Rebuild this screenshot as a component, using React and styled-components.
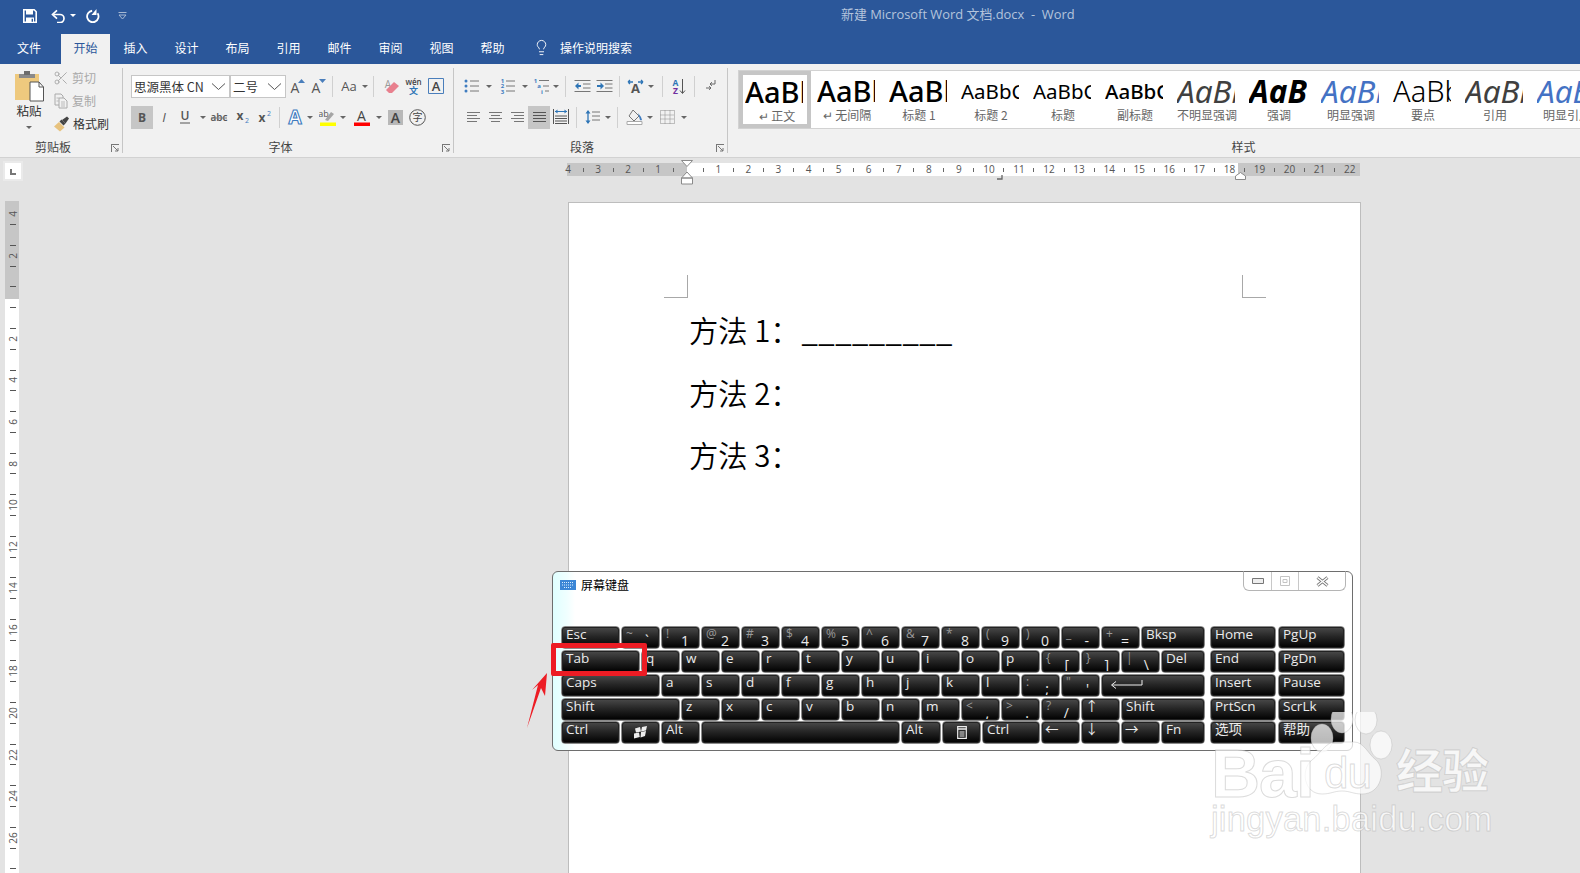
import React from "react";
import styled, { createGlobalStyle } from "styled-components";
import { Scissors, Lightbulb } from "lucide-react";

const CJK = `"Noto Sans CJK SC", "Noto Sans", sans-serif`;
const LATIN = `"Open Sans", "Noto Sans CJK SC", sans-serif`;

const Global = createGlobalStyle`
  html, body { margin: 0; padding: 0; overflow: hidden; background: #e3e3e3; }
  body { font-family: ${CJK}; }
  * { box-sizing: border-box; }
`;

const Root = styled.div`
  position: relative; width: 1580px; height: 873px; overflow: hidden;
  display: flex; flex-direction: column; background: #e3e3e3;
`;

/* ---------- title & tabs ---------- */
const TitleBar = styled.div`
  height: 34px; flex: none; background: #2b579a; position: relative;
  display: flex; align-items: center; padding: 0 0 3px 23px;
`;
const QuickItem = styled.div`
  width: ${p => p.$w}px; height: 18px; display: flex; align-items: center; gap: 4px;
`;
const DocTitle = styled.div`
  margin-left: 711px; margin-top: -4px; font-size: 12.9px; color: #b4c4dc; white-space: pre; font-family: ${LATIN};
`;
const TabBar = styled.div`
  height: 30px; flex: none; background: #2b579a; display: flex; padding-left: 4px;
`;
const Tab = styled.div`
  width: ${p => p.$w}px; margin-right: ${p => p.$mr || 0}px;
  display: flex; align-items: center; justify-content: center; font-size: 12px; padding-bottom: 3px;
  color: ${p => (p.$active ? "#2b579a" : "#fff")};
  background: ${p => (p.$active ? "#f1f1f1" : "transparent")};
`;
const Tell = styled.div`
  margin-left: 15px; padding-bottom: 3px; display: flex; align-items: center; gap: 10px; color: #fff; font-size: 12px;
`;

/* ---------- ribbon ---------- */
const Ribbon = styled.div`
  height: 94px; flex: none; background: #f1f1f1; border-bottom: 1px solid #d2d2d2;
  display: flex; padding-top: 4px; color: #444; overflow: hidden;
`;
const Group = styled.div`
  position: relative; flex: none; width: ${p => p.$w}px; height: 85px;
  border-right: 1px solid ${p => (p.$open ? "transparent" : "#c6c6c6")}; display: flex; flex-direction: column;
`;
const GroupBody = styled.div`
  height: 70px; flex: none; display: flex;
`;
const GroupLabel = styled.div`
  height: 15px; line-height: 17px; font-size: 12px; color: #444; text-align: center;
  padding-right: ${p => p.$pr || 0}px;
`;
const Launcher = styled.div`
  position: absolute; right: 3px; bottom: 1px; width: 8px; height: 8px;
  border-left: 1px solid #777; border-top: 1px solid #777;
  display: flex; align-items: flex-end; justify-content: flex-end;
`;
const PasteCol = styled.div`
  width: 32px; margin-left: 13px; padding-top: 3px; display: flex; flex-direction: column; align-items: center;
  font-size: 12.5px; color: #333; line-height: 16px;
`;
const PasteLabel = styled.div`
  margin-top: 1px;
`;
const PasteCaret = styled.div`
  width: 0; height: 0; margin-top: 7px;
  border-left: 3px solid transparent; border-right: 3px solid transparent; border-top: 3px solid #666;
`;
const ClipCol = styled.div`
  margin: -2px 0 0 8px; display: flex; flex-direction: column;
`;
const ClipItem = styled.div`
  height: 23px; display: flex; align-items: center; gap: 3px; font-size: 12px;
  color: ${p => (p.$off ? "#a9a9a9" : "#333")};
`;
const ToolStack = styled.div`
  padding: 7px 0 0 ${p => p.$pl}px; display: flex; flex-direction: column; gap: 8px;
`;
const ToolRow = styled.div`
  height: 23px; display: flex; align-items: center;
`;
const Tool = styled.div`
  width: ${p => p.$w}px; height: 23px; flex: none; display: flex; align-items: center; justify-content: center;
  margin-left: ${p => p.$ml || 0}px; padding-bottom: 1px;
  background: ${p => (p.$on ? "#c6c6c6" : "transparent")};
`;
const Sep = styled.div`
  width: 1px; height: 21px; flex: none; background: #d0d0d0; margin: 0 ${p => p.$m}px;
`;
const Caret = styled.div`
  width: 0; height: 0; flex: none; margin: 0 ${p => p.$m ?? 0}px;
  border-left: 3px solid transparent; border-right: 3px solid transparent; border-top: 3px solid #666;
`;
const Select = styled.div`
  width: ${p => p.$w}px; height: 23px; flex: none; margin-right: ${p => p.$mr || 0}px;
  background: #fff; border: 1px solid #c6c6c6; padding: 0 3px 0 2px;
  display: flex; align-items: center; justify-content: space-between; font-size: 12.5px; color: #333; white-space: nowrap;
`;
const Gallery = styled.div`
  margin: 2px 0 0 10px; height: 59px; width: 1000px; background: #fff; border: 1px solid #d2d2d2; display: flex;
`;
const StyleItem = styled.div`
  width: 72px; height: 57px; flex: none; padding: 5px 0 0 ${p => (p.$sel ? 2 : 6)}px;
  border: ${p => (p.$sel ? "4px solid #c6c6c6" : "none")};
  display: flex; flex-direction: column; align-items: flex-start;
`;
const Preview = styled.div`
  width: 58px; height: 30px; overflow: hidden; white-space: nowrap; line-height: 30px;
  font-family: "Noto Sans", sans-serif; margin-top: ${p => (p.$sel ? -3 : 0)}px;
  font-size: ${p => p.$size}px; font-weight: ${p => p.$weight || 400}; font-style: ${p => (p.$italic ? "italic" : "normal")};
  color: ${p => p.$color || "#000"};
`;
const StyleName = styled.div`
  width: 60px; text-align: center; font-size: 12px; line-height: 16px; margin-top: ${p => (p.$sel ? 4 : 1)}px; color: #666; white-space: nowrap;
  margin-left: ${p => (p.$sel ? 2 : 0)}px;
`;

/* ---------- workspace ---------- */
const Workspace = styled.div`
  flex: 1; min-height: 0; display: grid; grid-template-columns: 567px 793px 1fr; grid-template-rows: 43px 1fr; background: #e3e3e3;
`;
const CornerCell = styled.div`
  padding: 3px 0 0 3px;
`;
const Corner = styled.div`
  width: 20px; height: 20px; background: #fff; border: 2px solid #eaeaea; position: relative;
  display: flex; align-items: center; justify-content: center;
`;
const CornerMark = styled.div`
  width: 6px; height: 6px; border-left: 2px solid #777; border-bottom: 2px solid #777; margin-top: 2px;
`;
const HRuler = styled.div`
  grid-column: 2; position: relative; margin-top: 5px; height: 13px;
  background: linear-gradient(to right, #c6c6c6 120px, #fff 120px, #fff 671px, #c6c6c6 671px);
  display: flex; padding-left: 0;
`;
const HItems = styled.div`
  display: flex; margin-left: -6.5px; align-items: center; height: 13px;
`;
const HItem = styled.div`
  flex: 0 0 15.04px; width: 15.04px; display: flex; justify-content: center; align-items: center;
  font-size: 10px; line-height: 13px; color: #555; font-family: ${LATIN}; white-space: nowrap;
`;
const HTick = styled.div`
  width: 1px; height: 4px; background: #666;
`;
const Marker = styled.div`
  position: absolute; left: ${p => p.$x}px; top: ${p => p.$y}px; line-height: 0;
`;
const VCell = styled.div`
  grid-column: 1; grid-row: 2; padding-left: 5px; min-height: 0; overflow: hidden;
`;
const VRuler = styled.div`
  width: 14px; height: 700px; padding-top: 8px;
  background: linear-gradient(to bottom, #c6c6c6 98px, #fff 98px);
`;
const VItem = styled.div`
  height: 10.4px; display: flex; align-items: center; justify-content: center; padding-left: 1px;
`;
const VLabel = styled.div`
  transform: rotate(-90deg); font-size: 10px; line-height: 10px; color: #555; font-family: ${LATIN}; white-space: nowrap;
`;
const VTick = styled.div`
  width: 6px; height: 1px; background: #555;
`;
const Page = styled.div`
  grid-column: 2; grid-row: 2; margin: 1px 0 0 1px; background: #fff; width: 793px; min-height: 0;
  border: 1px solid #bdbdbd; border-bottom: none; overflow: hidden;
`;
const CropRow = styled.div`
  display: flex; justify-content: space-between; padding: 72px 94px 0 95px;
`;
const Crop = styled.div`
  width: 24px; height: 23px; border-bottom: 1px solid #a8a8a8;
  ${p => (p.$right ? "border-left: 1px solid #a8a8a8;" : "border-right: 1px solid #a8a8a8;")}
`;
const DocBody = styled.div`
  padding: 0 0 0 120px; margin-top: 0;
`;
const DocLine = styled.div`
  height: 62.5px; line-height: 62.5px; font-size: 29.3px; font-weight: 350; color: #000; white-space: pre;
  font-family: ${CJK};
`;
const Blank = styled.span`
  letter-spacing: 0.5px; margin-left: 2px;
`;

/* ---------- on-screen keyboard ---------- */
const KbWindow = styled.div`
  position: absolute; left: 552px; top: 571px; width: 801px; height: 180px;
  border: 1px solid #6e6e6e; border-radius: 6px;
  background: linear-gradient(to right, #dfffff 0, #f0ffff 14px, #fff 22px);
  padding: 54px 0 0 8px;
`;
const KbTitle = styled.div`
  position: absolute; left: 7px; top: 5px; display: flex; align-items: center; gap: 5px; font-size: 12px; color: #000; line-height: 16px;
`;
const KbControls = styled.div`
  position: absolute; right: 6px; top: -1px; height: 20px; width: 103px; display: flex;
  border: 1px solid #b5b5b5; border-top-color: #6e6e6e; border-radius: 0 0 6px 6px; background: #fff;
`;
const KbCtl = styled.div`
  width: ${p => p.$w}px; display: flex; align-items: center; justify-content: center;
  border-right: ${p => (p.$last ? "none" : "1px solid #c8c8c8")};
`;
const KeyPad = styled.div`
  display: flex; gap: 5px;
`;
const KeyCol = styled.div`
  display: flex; flex-direction: column; gap: 1px;
`;
const KeyRow = styled.div`
  display: flex; gap: 1px; height: 23px; margin-top: ${p => (p.$pull ? -1 : 0)}px;
`;
const NavRow = styled(KeyRow)`
  gap: 2px;
`;
const Key = styled.div`
  width: ${p => p.$w}px; height: 23px; flex: none; border-radius: 4px; border: 1px solid #8b8b8b; outline: 1px solid #222; outline-offset: -2px;
  background: linear-gradient(to bottom, #4a4a4a 0, #262626 45%, #000 100%);
  color: #ececec; font-family: ${LATIN}; font-size: 13.5px; line-height: 14px; padding: 0 ${p => p.$pr ?? 4}px 0 ${p => p.$pl ?? 4}px;
  display: flex; justify-content: ${p => (p.$center ? "center" : "space-between")}; align-items: ${p => (p.$center ? "center" : "flex-start")};
  white-space: nowrap; overflow: hidden;
`;
const Sup = styled.span`
  font-size: 12px; color: #9a9a9a; line-height: 13px;
`;
const Main = styled.span`
  font-size: 14px; color: #ececec; line-height: 16px; margin-top: 6px;
`;
const EnterSlot = styled.span`
  margin: 5px 0 0 4px; line-height: 0;
`;

/* ---------- annotations ---------- */
const RedBox = styled.div`
  position: absolute; left: 551px; top: 643px; width: 96px; height: 33px;
  border: 5px solid #ed1c24; border-radius: 2px;
`;
const ArrowHolder = styled.div`
  position: absolute; left: 525px; top: 670px; line-height: 0;
`;
const Watermark = styled.div`
  position: absolute; left: 1208px; top: 712px; width: 300px; height: 130px; pointer-events: none;
`;
const PawArt = styled.svg`
  position: absolute; left: 0; top: 0;
`;
const MarkText = styled.div`
  position: absolute; left: ${p => p.$x}px; top: ${p => p.$y}px; font-size: ${p => p.$size}px; font-weight: ${p => p.$weight || 700};
  line-height: 1; white-space: nowrap; font-family: ${p => (p.$cjk ? CJK : `"Liberation Sans", sans-serif`)};
  letter-spacing: ${p => p.$ls || 0}px;
  color: rgba(255,255,255,.72); -webkit-text-stroke: 1px rgba(170,170,170,.42);
`;

/* ---------- icons ---------- */
const T = ({ x = 8, y = 13, s = 14, c = "#555", w = 400, fs = "normal", a = "middle", children }) => (
  <text x={x} y={y} fontSize={s} fill={c} fontWeight={w} fontStyle={fs} textAnchor={a} fontFamily="Open Sans, Noto Sans CJK SC, sans-serif">{children}</text>
);
const I = ({ w = 16, h = 16, children }) => <svg width={w} height={h} viewBox={`0 0 ${w} ${h}`} fill="none">{children}</svg>;

const Save = () => <I w={14} h={14}><path d="M0.800 .8h10.400l2 2v10.400H.8z" fill="none" stroke="#fff" strokeWidth="1.600"/><path d="M3 1h7v4.500H3z" fill="#fff"/><path d="M3 8.500h8v5H3z" fill="#fff"/><path d="M8.600 9.800h1.400v3H8.600z" fill="#2b579a"/></I>;
const Undo = () => <I w={15} h={14}><path d="M2.500 5.500h6.500a4 4 0 0 1 0 8H6" stroke="#fff" strokeWidth="1.700"/><path d="M6 1.300L1.500 5.500 6 9.700" stroke="#fff" strokeWidth="1.700"/></I>;
const Redo = () => <I w={14} h={14}><path d="M4 2.600a5.700 5.700 0 1 0 6 0" stroke="#fff" strokeWidth="1.800" transform="rotate(25 7 7)"/><path d="M10.500 0v6h-5z" fill="#fff"/></I>;
const Customize = () => <I w={9} h={8}><path d="M0.500 .5h8" stroke="#a7b9d3"/><path d="M1 3l3.500 4L8 3z" stroke="#a7b9d3"/></I>;
const WhiteCaret = styled(Caret)`border-top-color: #fff;`;

const Paste = () => <I w={29} h={31}>
  <path d="M0 3h24v26H0z" fill="#eec97e"/><path d="M4 3h16v4H4z" fill="#8a8a8a"/><path d="M9 0h6v4H9z" fill="#6c6c6c"/>
  <path d="M15 11h9l4.500 5v14H15z" fill="#fff" stroke="#555"/><path d="M24 11v5h4.500" stroke="#555"/>
</I>;
const Copy = () => <I><path d="M2 1h6l2 2v9H2z" stroke="#aaa"/><path d="M6 5h5l3 3v7H6z" fill="#f1f1f1" stroke="#aaa"/><path d="M8 9h4M8 11h4M8 13h4M3.500 5H6M3.500 8H6" stroke="#bbb"/></I>;
const Painter = () => <I w={17} h={16}><path d="M1 10.500L6 6l5.500 5.500L7 15.500z" fill="#e7c27e"/><path d="M6.500 5.500l2-2 4 4-2 2z" fill="#444"/><path d="M9 4l5-3.500 2 2-3.500 5z" fill="#444"/></I>;
const Chevron = ({ s = 15 }) => <I w={s} h={9}><path d={`M1 1.500L${s / 2} 7.500 ${s - 1} 1.500`} stroke="#555" strokeWidth="1"/></I>;
const Launch = () => <svg width="6" height="6" viewBox="0 0 6 6" fill="none"><path d="M0 0l5 5M5 2v3H2" stroke="#777"/></svg>;

const GrowA = ({ up }) => <I w={16} h={16}><T x={6} y={15} s={14}>A</T><path d={up ? "M9 5l3.500-4 3.500 4z" : "M9 1l3.500 4 3.500-4z"} fill="#4a7ebb"/></I>;
const Eraser = () => <I w={17} h={17}><T x={5} y={10} s={10} c="#999">A</T><path d="M3 12l8-8 5 4-7 7H6z" fill="#e8808e"/></I>;
const Wen = () => <I w={17} h={17}><T x={8.500} y={7} s={8} c="#444" w={600}>wén</T><T x={8.500} y={16} s={9} c="#2e75b6" w={700}>文</T></I>;
const BoxA = () => <I w={16} h={16}><path d="M.5.5h15v15H.5z" stroke="#4a7ebb"/><T x={8} y={13} s={13} c="#444" w={600}>A</T></I>;
const EffectA = () => <I w={16} h={17}><text x="8" y="15" fontSize="19" fontFamily="Open Sans" fontWeight="700" textAnchor="middle" fill="#fff" stroke="#3f7cc0" strokeWidth="1.100">A</text></I>;
const Highlight = () => <I w={17} h={17}><T x={4.500} y={8} s={9} c="#555">ab</T><path d="M6 11l6-8 3 2-6 7z" fill="#a5a5a5"/><path d="M1 13.500h16V17H1z" fill="#ff0"/></I>;
const ColorA = () => <I w={17} h={17}><T x={8.500} y={12} s={14} c="#444">A</T><path d="M1 13.500h16V17H1z" fill="#f00"/></I>;
const ShadeA = () => <I w={15} h={15}><path d="M0 0h15v15H0z" fill="#b8b8b8"/><T x={7.500} y={12.500} s={14} c="#444" w={600}>A</T></I>;
const Phon = () => <I w={17} h={17}><circle cx="8.500" cy="8.500" r="7.800" stroke="#555"/><T x={8.500} y={12} s={10} c="#444">字</T></I>;

const Bullets = () => <I w={16} h={16}><g fill="#3f7cc0"><circle cx="2" cy="3" r="1.500"/><circle cx="2" cy="8" r="1.500"/><circle cx="2" cy="13" r="1.500"/></g><path d="M6 3h9M6 8h9M6 13h9" stroke="#777"/></I>;
const Numbers = () => <I w={16} h={16}><T x={2.500} y={5} s={6} c="#3f7cc0" w={700}>1</T><T x={2.500} y={10} s={6} c="#3f7cc0" w={700}>2</T><T x={2.500} y={15.500} s={6} c="#3f7cc0" w={700}>3</T><path d="M6 3h9M6 8h9M6 13h9" stroke="#777"/></I>;
const Multi = () => <I w={17} h={16}><T x={2.500} y={5} s={6} c="#3f7cc0" w={700}>1</T><T x={6} y={10} s={6} c="#3f7cc0" w={700}>a</T><T x={9} y={15.500} s={6} c="#3f7cc0" w={700}>i</T><path d="M6 2.500h10M10 8h6M12 13h4" stroke="#777"/></I>;
const Outdent = () => <I w={17} h={14}><path d="M.5 1.500h16M9 5h7.500M9 9h7.500M.5 12.500h16" stroke="#777"/><path d="M7 7H2" stroke="#2e75b6" strokeWidth="2"/><path d="M4.500 3.500L1 7l3.500 3.500z" fill="#2e75b6"/></I>;
const Indent = () => <I w={17} h={14}><path d="M.5 1.500h16M9 5h7.500M9 9h7.500M.5 12.500h16" stroke="#777"/><path d="M1 7h5" stroke="#2e75b6" strokeWidth="2"/><path d="M4.500 3.500L8 7l-3.500 3.500z" fill="#2e75b6"/></I>;
const CnLayout = () => <I w={17} h={16}><T x={8.500} y={15} s={13} c="#555" w={700}>A</T><path d="M1 4h5M1 4l2-2M1 4l2 2M16 4h-5M16 4l-2-2M16 4l-2 2" stroke="#2e75b6" strokeWidth="1.300"/></I>;
const Sort = () => <I w={15} h={17}><T x={4.500} y={7.500} s={8.500} c="#2e75b6" w={700}>A</T><T x={4.500} y={16} s={8.500} c="#7030a0" w={700}>Z</T><path d="M11.500 1v14M9 12.500l2.500 3 2.500-3" stroke="#555"/></I>;
const Pilcrow = () => <I w={11} h={14}><path d="M10 1v4H5M7 3.200L5 5l2 1.800M1 9h5M4 7.200L6 9l-2 1.800" stroke="#666"/></I>;
const Align = ({ kind }) => {
  const rows = { l: ["1 14", "1 11", "1 14", "1 11"], c: ["1 14", "3 12", "1 14", "3 12"], r: ["1 14", "4 14", "1 14", "4 14"], j: ["1 14", "1 14", "1 14", "1 14"] }[kind];
  return <I w={15} h={12}>{rows.map((r, i) => { const [a, b] = r.split(" "); return <path key={i} d={`M${a} ${1.500 + i * 3}H${b}`} stroke={kind === "j" ? "#555" : "#777"}/>; })}</I>;
};
const Distributed = () => <I w={16} h={16}><path d="M.5 0v15M15.500 0v15" stroke="#555"/><path d="M2 2.500h12" stroke="#2e75b6"/><path d="M4.500 .5L2 2.500l2.500 2zM11.500 .5L14 2.500l-2.500 2z" fill="#2e75b6"/><path d="M2 7h12M2 9.500h12M2 12h12M2 14.500h12" stroke="#555"/></I>;
const LineSp = () => <I w={15} h={16}><path d="M3 2v12" stroke="#2e75b6" strokeWidth="1.300"/><path d="M.5 4.500L3 1l2.500 3.500zM.5 11.500L3 15l2.500-3.500z" fill="#2e75b6"/><path d="M7 3h8M7 7h8M7 11h8" stroke="#777"/></I>;
const Shading = () => <I w={17} h={16}><path d="M7 1l6 6-5 5-5-5z" stroke="#777"/><path d="M12 4l3 4 1 3a2 2 0 0 1-2 0z" fill="#3f7cc0"/><path d="M1 12.500h15v3H1z" stroke="#aaa" fill="#fff"/></I>;
const Borders = () => <I w={15} h={14}><path d="M.5.5h14v13H.5zM5 .5v13M10 .5v13M.5 5h14M.5 9h14" stroke="#8a8a8a" strokeDasharray="1 1"/></I>;

const Hourglass = () => <svg width="12" height="25" viewBox="0 0 12 25" fill="none"><path d="M.5.5h11L6 6.500zM6 12l5.500 6H.5zM.5 18h11v6H.5z" fill="#fff" stroke="#8a8a8a"/></svg>;
const RightIndent = () => <svg width="11" height="8" viewBox="0 0 11 8" fill="none"><path d="M5.500.5L10.500 4v3.500H.5V4z" fill="#fff" stroke="#8a8a8a"/></svg>;
const TabStop = () => <svg width="6" height="5" viewBox="0 0 6 5" fill="none"><path d="M5 0v4H0" stroke="#666" strokeWidth="1.300"/></svg>;

const KbIcon = () => <I w={16} h={10}><path d="M0 0h16v10H0z" fill="#3b86d6"/><path d="M2 2.500h12M2 5h12M4 7.500h8" stroke="#dbeeff" strokeDasharray="1 1"/></I>;
const Win = () => <I w={15} h={13}><path d="M2 2.500l5-1.500 1 4.500-5 1zM9 1l5-1-1 4.500-5 1zM1 7.500l5-1 .8 4.500-5.800 1.500zM8 6l5-1-1 5-4.500 1.500z" fill="#eee"/></I>;
const MenuKey = () => <I w={10} h={13}><path d="M.7.7h8.600v11.600H.7z" stroke="#eee" strokeWidth="1.200"/><path d="M.7 3h8.600" stroke="#eee" strokeWidth="1.600"/><path d="M2.500 6h5M2.500 8h5M2.500 10h5" stroke="#eee"/></I>;
const EnterGlyph = () => <svg width="33" height="9" viewBox="0 0 33 9" fill="none"><path d="M32 0v5H2M6 1.500L1.500 5 6 8.500" stroke="#eee"/></svg>;
const CloseGlyph = () => <I w={13} h={11}><path d="M1.500 1.500l10 8M11.500 1.500l-10 8" stroke="#777" strokeWidth="3"/><path d="M1.500 1.500l10 8M11.500 1.500l-10 8" stroke="#fff" strokeWidth="1.400"/></I>;

/* ---------- data ---------- */
const tabs = [["文件", 50, 7], ["开始", 49], ["插入", 51], ["设计", 51], ["布局", 51], ["引用", 51], ["邮件", 51], ["审阅", 51], ["视图", 51], ["帮助", 51]];

const styleList = [
  { n: "↵ 正文", s: 29, w: 500, sel: true },
  { n: "↵ 无间隔", s: 29, w: 500 },
  { n: "标题 1", s: 29, w: 500 },
  { n: "标题 2", s: 20.500 },
  { n: "标题", s: 20.500 },
  { n: "副标题", s: 20.500, w: 500 },
  { n: "不明显强调", s: 31.500, i: true, c: "#404040" },
  { n: "强调", s: 31.500, i: true, w: 700 },
  { n: "明显强调", s: 31.500, i: true, c: "#4472c4" },
  { n: "要点", s: 29, w: 300 },
  { n: "引用", s: 31.500, i: true, c: "#404040" },
  { n: "明显引用", s: 31.500, i: true, c: "#4472c4" },
];

const keyRows = [
  { keys: [{ w: 59, l: "Esc" }, { s: "~", m: "`" }, { s: "!", m: "1" }, { s: "@", m: "2" }, { s: "#", m: "3" }, { s: "$", m: "4" }, { s: "%", m: "5" }, { s: "^", m: "6" }, { s: "&", m: "7" }, { s: "*", m: "8" }, { s: "(", m: "9" }, { s: ")", m: "0" }, { s: "_", m: "-" }, { s: "+", m: "=" }, { w: 64, l: "Bksp" }] },
  { keys: [{ w: 79, l: "Tab" }, ..."qwertyuiop".split("").map(l => ({ l })), { s: "{", m: "[" }, { s: "}", m: "]" }, { s: "|", m: "\\" }, { w: 44, l: "Del" }] },
  { keys: [{ w: 99, l: "Caps" }, ..."asdfghjkl".split("").map(l => ({ l })), { s: ":", m: ";" }, { s: "\"", m: "'" }, { w: 104, icon: <EnterGlyph /> }] },
  { keys: [{ w: 119, l: "Shift" }, ..."zxcvbnm".split("").map(l => ({ l })), { s: "<", m: "," }, { s: ">", m: "." }, { s: "?", m: "/" }, { l: "↑", pl: 3 }, { w: 84, l: "Shift" }] },
  { pull: true, keys: [{ w: 59, l: "Ctrl" }, { icon: <Win />, center: true }, { l: "Alt" }, { w: 199 }, { w: 40, l: "Alt" }, { icon: <MenuKey />, center: true }, { w: 58, l: "Ctrl" }, { l: "←", pl: 3 }, { l: "↓", pl: 3 }, { l: "→", pl: 3 }, { w: 44, l: "Fn" }] },
];
const navRows = [["Home", "PgUp"], ["End", "PgDn"], ["Insert", "Pause"], ["PrtScn", "ScrLk"], ["选项", "帮助"]];

const hLabels = [];
[4, 3, 2, 1, "", 1, 2, 3, 4, 5, 6, 7, 8, 9, 10, 11, 12, 13, 14, 15, 16, 17, 18, 19, 20, 21, 22].forEach((n, i, arr) => {
  hLabels.push({ n });
  if (i < arr.length - 1) hLabels.push({ tick: true });
});
const vItems = [];
[4, 2, "", 2, 4, 6, 8, 10, 12, 14, 16, 18, 20, 22, 24, 26].forEach(n => {
  vItems.push({ n }, { tick: true }, { blank: true }, { tick: true });
});

const KeyView = ({ k }) => (
  <Key $w={k.w || 39} $center={k.center} $pl={k.s ? 4 : k.pl} $pr={k.s ? 10 : 4}>
    {k.s ? <><Sup>{k.s}</Sup><Main>{k.m}</Main></> : k.icon && !k.center ? <EnterSlot>{k.icon}</EnterSlot> : k.icon || k.l}
  </Key>
);

export default function App() {
  return (
    <Root>
      <Global />
      <TitleBar>
        <QuickItem $w={28}><Save /></QuickItem>
        <QuickItem $w={35}><Undo /><WhiteCaret /></QuickItem>
        <QuickItem $w={32}><Redo /></QuickItem>
        <QuickItem $w={12}><Customize /></QuickItem>
        <DocTitle>新建 Microsoft Word 文档.docx  -  Word</DocTitle>
      </TitleBar>
      <TabBar>
        {tabs.map(([t, w, mr]) => <Tab key={t} $w={w} $mr={mr} $active={t === "开始"}>{t}</Tab>)}
        <Tell><Lightbulb size={17} color="#fff" strokeWidth={1.300} />操作说明搜索</Tell>
      </TabBar>

      <Ribbon>
        <Group $w={123}>
          <GroupBody>
            <PasteCol>
              <Paste />
              <PasteLabel>粘贴</PasteLabel>
              <PasteCaret />
            </PasteCol>
            <ClipCol>
              <ClipItem $off><Scissors size={16} color="#a9a9a9" strokeWidth={1.400} />剪切</ClipItem>
              <ClipItem $off><Copy />复制</ClipItem>
              <ClipItem><Painter />格式刷</ClipItem>
            </ClipCol>
          </GroupBody>
          <GroupLabel $pr={16}>剪贴板</GroupLabel>
          <Launcher><Launch /></Launcher>
        </Group>

        <Group $w={331}>
          <GroupBody>
            <ToolStack $pl={8}>
              <ToolRow>
                <Select $w={99}>思源黑体 CN<Chevron /></Select>
                <Select $w={56}>二号<Chevron /></Select>
                <Tool $w={22}><GrowA up /></Tool>
                <Tool $w={20}><GrowA /></Tool>
                <Sep $m={4} />
                <Tool $w={24}><I w={22} h={16}><T x={11} y={13} s={13} c="#555">Aa</T></I></Tool>
                <Caret $m={1} />
                <Sep $m={4} />
                <Tool $w={26}><Eraser /></Tool>
                <Tool $w={18}><Wen /></Tool>
                <Tool $w={27}><BoxA /></Tool>
              </ToolRow>
              <ToolRow>
                <Tool $w={22} $on><I><T w={700} s={12}>B</T></I></Tool>
                <Tool $w={21}><I><T fs="italic" s={13}>I</T></I></Tool>
                <Tool $w={22}><I><T s={12} y={11} w={600}>U</T><path d="M3 14h10" stroke="#555"/></I></Tool>
                <Caret $m={4} />
                <Tool $w={18}><I w={18}><T x={9} y={12} s={10} w={600}>abc</T><path d="M1 9h16" stroke="#777"/></I></Tool>
                <Tool $w={27}><I w={16}><T x={6} y={11} s={12} w={700}>x</T><T x={13} y={14} s={7} c="#3f7cc0">2</T></I></Tool>
                <Tool $w={18}><I w={16}><T x={6} y={13} s={12} w={700}>x</T><T x={13} y={7} s={7} c="#3f7cc0">2</T></I></Tool>
                <Sep $m={6} />
                <Tool $w={18}><EffectA /></Tool>
                <Caret $m={3} />
                <Tool $w={22}><Highlight /></Tool>
                <Caret $m={2} />
                <Tool $w={26}><ColorA /></Tool>
                <Caret $m={1.500} />
                <Tool $w={25}><ShadeA /></Tool>
                <Tool $w={19}><Phon /></Tool>
              </ToolRow>
            </ToolStack>
          </GroupBody>
          <GroupLabel $pr={15}>字体</GroupLabel>
          <Launcher><Launch /></Launcher>
        </Group>

        <Group $w={274}>
          <GroupBody>
            <ToolStack $pl={9}>
              <ToolRow>
                <Tool $w={18}><Bullets /></Tool>
                <Caret $m={5} />
                <Tool $w={22}><Numbers /></Tool>
                <Caret $m={2.500} />
                <Tool $w={22}><Multi /></Tool>
                <Caret $m={1} />
                <Sep $m={5} />
                <Tool $w={22}><Outdent /></Tool>
                <Tool $w={22}><Indent /></Tool>
                <Sep $m={3.500} />
                <Tool $w={24}><CnLayout /></Tool>
                <Caret $m={1} />
                <Sep $m={6.500} />
                <Tool $w={18}><Sort /></Tool>
                <Sep $m={7} />
                <Tool $w={16}><Pilcrow /></Tool>
              </ToolRow>
              <ToolRow>
                <Tool $w={21}><Align kind="l" /></Tool>
                <Tool $w={22}><Align kind="c" /></Tool>
                <Tool $w={22}><Align kind="r" /></Tool>
                <Tool $w={22} $on><Align kind="j" /></Tool>
                <Tool $w={22}><Distributed /></Tool>
                <Sep $m={4} />
                <Tool $w={22}><LineSp /></Tool>
                <Caret $m={2} />
                <Sep $m={4} />
                <Tool $w={24}><Shading /></Tool>
                <Caret $m={1} />
                <Tool $w={24} $ml={1}><Borders /></Tool>
                <Caret $m={2} />
              </ToolRow>
            </ToolStack>
          </GroupBody>
          <GroupLabel $pr={17}>段落</GroupLabel>
          <Launcher><Launch /></Launcher>
        </Group>

        <Group $w={1032} $open>
          <GroupBody>
            <Gallery>
              {styleList.map(s => (
                <StyleItem key={s.n} $sel={s.sel}>
                  <Preview $sel={s.sel} $size={s.s} $weight={s.w} $italic={s.i} $color={s.c}>AaBbCcDd</Preview>
                  <StyleName $sel={s.sel}>{s.n}</StyleName>
                </StyleItem>
              ))}
            </Gallery>
          </GroupBody>
          <GroupLabel>样式</GroupLabel>
        </Group>
      </Ribbon>

      <Workspace>
        <CornerCell><Corner><CornerMark /></Corner></CornerCell>
        <HRuler>
          <HItems>
            {hLabels.map((h, i) => <HItem key={i}>{h.tick ? <HTick /> : h.n}</HItem>)}
          </HItems>
          <Marker $x={114} $y={-3}><Hourglass /></Marker>
          <Marker $x={668} $y={9}><RightIndent /></Marker>
          <Marker $x={430} $y={10}><TabStop /></Marker>
        </HRuler>
        <VCell>
          <VRuler>
            {vItems.map((v, i) => <VItem key={i}>{v.tick ? <VTick /> : v.blank ? null : <VLabel>{v.n}</VLabel>}</VItem>)}
          </VRuler>
        </VCell>
        <Page>
          <CropRow><Crop /><Crop $right /></CropRow>
          <DocBody>
            <DocLine>方法 1：<Blank>_________</Blank></DocLine>
            <DocLine>方法 2：</DocLine>
            <DocLine>方法 3：</DocLine>
          </DocBody>
        </Page>
      </Workspace>

      <KbWindow>
        <KbTitle><KbIcon />屏幕键盘</KbTitle>
        <KbControls>
          <KbCtl $w={28}><I w={12} h={6}><path d="M.5.5h11v5H.5z" stroke="#777" fill="#eee"/></I></KbCtl>
          <KbCtl $w={27}><I w={10} h={10}><path d="M.5.5h9v9h-9zM3 3.500h4v3H3z" stroke="#c4c4c4"/></I></KbCtl>
          <KbCtl $w={46} $last><CloseGlyph /></KbCtl>
        </KbControls>
        <KeyPad>
          <KeyCol>
            {keyRows.map((r, i) => <KeyRow key={i} $pull={r.pull}>{r.keys.map((k, j) => <KeyView key={j} k={k} />)}</KeyRow>)}
          </KeyCol>
          <KeyCol>
            {navRows.map(([a, b], i) => (
              <NavRow key={a} $pull={i === 4}>
                <Key $w={66}>{a}</Key>
                <Key $w={67}>{b}</Key>
              </NavRow>
            ))}
          </KeyCol>
        </KeyPad>
      </KbWindow>

      <RedBox />
      <ArrowHolder>
        <svg width="24" height="60" viewBox="0 0 24 60" fill="none"><path d="M2 58L13 15 7 20 22 3 20 26 16 18z" fill="#ed1c24"/></svg>
      </ArrowHolder>

      <Watermark>
        <PawArt width="300" height="130" viewBox="0 0 300 130" fill="none">
          <g fill="rgba(255,255,255,.72)" stroke="rgba(170,170,170,.35)">
            <ellipse cx="114" cy="26" rx="11" ry="14" />
            <ellipse cx="134" cy="7" rx="11" ry="14" />
            <ellipse cx="158" cy="8" rx="11" ry="14" />
            <ellipse cx="173" cy="33" rx="11" ry="14" />
            <path d="M146 30c10 0 14 12 22 18 10 9 6 34-14 34-9 0-12-3-20-3-8 0-11 3-20 3-18 0-22-24-10-34 8-6 14-18 23-18 6 0 13 0 19 0z" />
          </g>
        </PawArt>
        <MarkText $x={3} $y={27} $size={68} $ls={-1}>Bai</MarkText>
        <MarkText $x={116} $y={39} $size={44} $weight={400} $ls={-1}>du</MarkText>
        <MarkText $x={188} $y={32} $size={47} $cjk $ls={-1}>经验</MarkText>
        <MarkText $x={3} $y={90} $size={34.500} $weight={400} $ls={.2}>jingyan.baidu.com</MarkText>
      </Watermark>
    </Root>
  );
}
